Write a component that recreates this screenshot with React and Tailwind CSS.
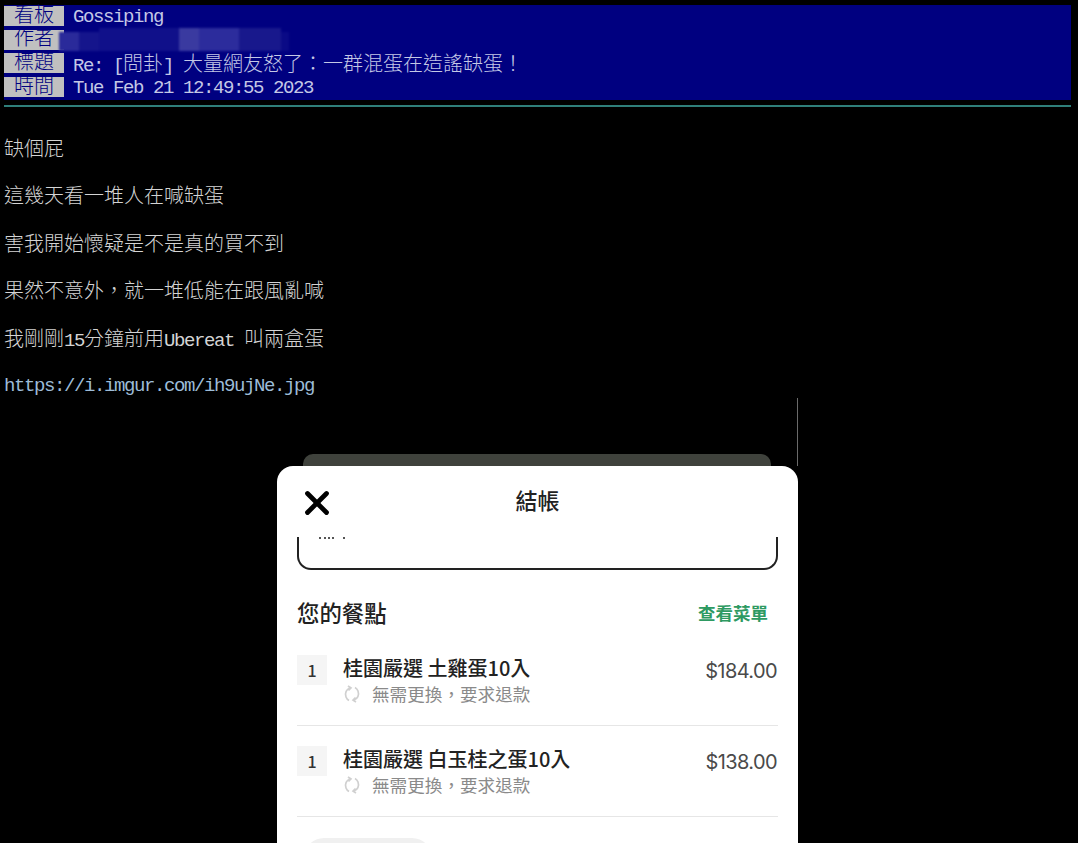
import { X } from "lucide-react";

const mono = "font-['Liberation_Mono','Noto_Sans_CJK_TC',monospace]";

function L({ children }) {
  return <span className="text-[19px] tracking-[-1.4px]">{children}</span>;
}

function MetaRow({ label, children, textClass = "pt-[2px]" }) {
  return (
    <div className="flex h-[23.7px] items-start pt-[1px]">
      <div className="flex h-[20px] w-[60px] items-center justify-center bg-[#c0c0c0] pt-[1px] text-[20px] leading-none font-light text-[#000080]">
        {label}
      </div>
      <div className={`ml-[9px] flex h-[20px] items-center whitespace-pre text-[20px] leading-none font-light text-[#c4c8e6] ${textClass}`}>
        <span>{children}</span>
      </div>
    </div>
  );
}

function BodyLine({ children, className = "text-[#d4d4d4]" }) {
  return (
    <div className={`flex h-[20px] items-center whitespace-pre text-[20px] leading-none font-light ${className}`}>
      <span>{children}</span>
    </div>
  );
}

function RefreshIcon() {
  return (
    <svg width="18" height="18" viewBox="0 0 18 18" fill="none" stroke="#d0d0d0" strokeWidth="1.7">
      <path d="M7 3 C3.5 4 1.5 8 3 12 C3.6 13.6 4.6 14.8 6 15.6 M5 1 L8 3 L5.5 5.5" />
      <path d="M11 15 C14.5 14 16.5 10 15 6 C14.4 4.4 13.4 3.2 12 2.4 M13 17 L10 15 L12.5 12.5" />
    </svg>
  );
}

function OrderItem({ name, price }) {
  return (
    <div className="flex h-[91px] border-b border-[#e6e6e6] pt-[20px]">
      <div className="flex h-[30px] w-[30px] items-center justify-center bg-[#f5f5f5] text-[16px] font-medium text-[#333]">
        1
      </div>
      <div className="ml-[16px] flex-1">
        <div className="text-[20px] leading-[26px] font-medium text-[#222]">{name}</div>
        <div className="mt-[1px] flex items-center text-[17.6px] leading-[24px] text-[#8a8a8a]">
          <RefreshIcon />
          <span className="ml-[11px]">無需更換，要求退款</span>
        </div>
      </div>
      <div className="mt-[3px] mr-[1px] font-['Inter',sans-serif] text-[20px] leading-[26px] tracking-[-0.6px] text-[#4a4a4a]">
        {price}
      </div>
    </div>
  );
}

export default function App() {
  return (
    <main className={`h-[843px] w-[1078px] overflow-hidden bg-black ${mono}`}>
      <section className="ml-[4px] w-[1067px]">
        <div className="pt-[5px]">
          <div className="h-[95px] bg-[#000080]">
            <MetaRow label="看板"><L>Gossiping</L></MetaRow>
            <div className="relative">
              <MetaRow label="作者" />
              <div className="absolute top-[-1px] left-[55px] flex h-[23px] items-end blur-[1px]">
                <div className="h-[19px] w-[20px] bg-[#2a2a9a]" />
                <div className="h-[19px] w-[20px] bg-[#15158c]" />
                <div className="h-[23px] w-[80px] bg-[#10108a]" />
                <div className="h-[23px] w-[20px] bg-[#3a3aa0]" />
                <div className="h-[23px] w-[40px] bg-[#2c2c9c]" />
                <div className="h-[23px] w-[42px] bg-[#18188c]" />
                <div className="h-[19px] w-[8px] bg-[#0a0a86]" />
              </div>
            </div>
            <MetaRow label="標題" textClass="pt-[6px]">
              <L>Re: [</L>問卦<L>] </L>大量網友怒了：一群混蛋在造謠缺蛋！
            </MetaRow>
            <MetaRow label="時間"><L>Tue Feb 21 12:49:55 2023</L></MetaRow>
          </div>
        </div>
        <div className="mt-[5px] h-[2px] bg-[#2f7f7a]" />

        <div className="mt-[33.5px] flex flex-col gap-[27.5px]">
          <BodyLine>缺個屁</BodyLine>
          <BodyLine>這幾天看一堆人在喊缺蛋</BodyLine>
          <BodyLine>害我開始懷疑是不是真的買不到</BodyLine>
          <BodyLine>果然不意外，就一堆低能在跟風亂喊</BodyLine>
          <BodyLine>我剛剛<L>15</L>分鐘前用<L>Ubereat </L>叫兩盒蛋</BodyLine>
          <BodyLine className="-translate-y-[2px] text-[#9dbcd8]"><L>https://i.imgur.com/ih9ujNe.jpg</L></BodyLine>
        </div>
      </section>

      <div className="ml-[277px] w-[521px] font-['Noto_Sans_CJK_TC','Noto_Sans',sans-serif]">
        <div className="flex h-[68px] flex-col justify-end border-r border-r-[#6a6a6a]">
          <div className="mx-[26px] h-[12px] rounded-t-[10px] bg-[#3f423c]" />
        </div>
        <div className="h-[400px] rounded-t-[16px] bg-white px-[20px]">
          <div className="relative flex h-[71px] justify-center pt-[17px]">
            <X className="absolute top-[18px] left-[1px] h-[38px] w-[38px] text-black" strokeWidth={3} absoluteStrokeWidth />
            <span className="text-[22px] leading-[32px] font-medium text-[#222]">結帳</span>
          </div>
          <div className="relative h-[33px] rounded-b-[14px] border-x-2 border-b-2 border-[#222]">
            <span className="absolute top-[0px] left-[20px] h-[2px] w-[15px] border-t-2 border-dotted border-[#555]" />
            <span className="absolute top-[0px] left-[44px] h-[2px] w-[2px] bg-[#555]" />
          </div>
          <div className="mt-[24px] flex h-[38px] items-center justify-between">
            <span className="text-[22.4px] font-medium text-[#222]">您的餐點</span>
            <span className="mr-[10px] text-[17.5px] font-semibold text-[#2e9a62]">查看菜單</span>
          </div>
          <div className="mt-[3px]">
            <OrderItem name="桂園嚴選 土雞蛋10入" price="$184.00" />
            <OrderItem name="桂園嚴選 白玉桂之蛋10入" price="$138.00" />
          </div>
          <div className="mt-[21px] ml-[7px] h-[40px] w-[128px] rounded-full bg-[#f0f0f0]" />
        </div>
      </div>
    </main>
  );
}
